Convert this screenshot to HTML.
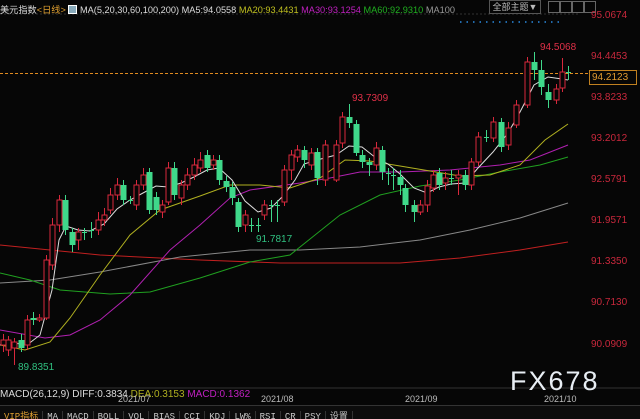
<!DOCTYPE html>
<html><head><meta charset="utf-8"><style>
html,body{margin:0;padding:0;background:#060606;overflow:hidden}
body{width:640px;height:419px;position:relative;font-family:"Liberation Sans","Noto Sans CJK SC",sans-serif}
.t{position:absolute;white-space:nowrap;font-size:10px}
.ax{position:absolute;left:591px;font-size:10px;color:#c8283c}
.bar{position:absolute;left:0;top:405px;width:640px;height:14px;background:#0c0c0c;border-top:1px solid #333}
.bar span{display:inline-block;font-size:9px;color:#c8c8c8;padding:0 4px;height:13px;line-height:13px;border-right:1px solid #333;font-family:"Liberation Mono","Noto Sans CJK SC",monospace}
</style></head><body>
<svg id="c" width="640" height="419" style="position:absolute;left:0;top:0"></svg>
<div class="t" style="left:0;top:2px;color:#ddd;font-size:9.2px">美元指数<span style="color:#e0a030">&lt;日线&gt;</span> <span style="display:inline-block;width:9px;height:9px;background:#8ab;vertical-align:-1px;border:1px solid #fff;box-sizing:border-box"></span> MA(5,20,30,60,100,200) MA5:94.0558 <span style="color:#c0c020">MA20:93.4431</span> <span style="color:#c020c0">MA30:93.1254</span> <span style="color:#20b020">MA60:92.9310</span> <span style="color:#999">MA100</span></div>
<div class="t" style="left:489px;top:0px;width:50px;height:12px;border:1px solid #555;color:#bbb;font-size:9px;text-align:center;line-height:12px">全部主题▼</div>
<div class="t" style="left:548px;top:1px;width:10px;height:10px;border:1px solid #666"></div>
<div class="t" style="left:560px;top:1px;width:10px;height:10px;border:1px solid #666"></div>
<div class="t" style="left:572px;top:1px;width:10px;height:10px;border:1px solid #666"></div>
<div class="t" style="left:584px;top:1px;width:10px;height:10px;border:1px solid #666"></div>
<div class="ax" style="top:10px">95.0674</div>
<div class="ax" style="top:51px">94.4453</div>
<div class="t" style="left:589px;top:70px;width:44px;height:13px;border:1px solid #c08020;color:#e09a30;font-size:10px;line-height:13px;padding-left:2px">94.2123</div>
<div class="ax" style="top:92px">93.8233</div>
<div class="ax" style="top:133px">93.2012</div>
<div class="ax" style="top:174px">92.5791</div>
<div class="ax" style="top:215px">91.9571</div>
<div class="ax" style="top:256px">91.3350</div>
<div class="ax" style="top:297px">90.7130</div>
<div class="ax" style="top:339px">90.0909</div>
<div class="t" style="left:540px;top:42px;color:#e03048">94.5068</div>
<div class="t" style="left:352px;top:93px;color:#e03048">93.7309</div>
<div class="t" style="left:256px;top:234px;color:#30c080">91.7817</div>
<div class="t" style="left:18px;top:362px;color:#30c080">89.8351</div>
<div class="t" style="left:510px;top:366px;color:#e8eef4;font-size:27px;letter-spacing:2px">FX678</div>
<div class="t" style="left:0;top:389px;color:#ddd">MACD(26,12,9) DIFF:0.3834 <span style="color:#b0b020">DEA:0.3153</span> <span style="color:#c020c0">MACD:0.1362</span></div>
<div class="t" style="left:118px;top:394px;color:#bbb;font-size:9px">2021/07</div>
<div class="t" style="left:261px;top:394px;color:#bbb;font-size:9px">2021/08</div>
<div class="t" style="left:405px;top:394px;color:#bbb;font-size:9px">2021/09</div>
<div class="t" style="left:544px;top:394px;color:#bbb;font-size:9px">2021/10</div>
<div class="bar"><span style="color:#e0a030">VIP指标</span><span>MA</span><span>MACD</span><span>BOLL</span><span>VOL</span><span>BIAS</span><span>CCI</span><span>KDJ</span><span>LW%</span><span>RSI</span><span>CR</span><span>PSY</span><span>设置</span></div>
<script>
var s='';
s+='<line x1="0" y1="14" x2="580" y2="14" stroke="#333" stroke-dasharray="2,2"/>';
s+='<line x1="460" y1="22" x2="560" y2="22" stroke="#2a8ae0" stroke-width="1.5" stroke-dasharray="1.5,5"/>';
s+='<line x1="0" y1="73.5" x2="588" y2="73.5" stroke="#e08a20" stroke-dasharray="3,2"/>';
s+='<line x1="0" y1="388" x2="640" y2="388" stroke="#333"/>';
function pl(p,c){s+='<polyline fill="none" stroke="'+c+'" stroke-width="1" points="'+p+'"/>';}
pl("0,245 100,255 200,260 280,263 400,263 460,258 520,250 568,242","#c02020");
pl("0,283 50,280 100,272 180,257 250,250 300,250 360,247 420,240 470,230 520,218 568,203","#888");
pl("0,273 30,280 60,290 110,294 150,292 200,278 250,262 290,255 340,215 380,195 420,186 460,180 500,172 540,165 568,157","#20a020");
pl("0,330 45,338 70,335 100,320 130,295 170,250 200,225 230,198 250,190 300,183 330,178 360,172 400,172 450,170 500,165 530,160 568,145","#b020b0");
pl("0,345 25,350 50,342 70,318 100,275 130,235 160,210 200,196 230,185 260,185 290,188 320,178 345,160 370,161 400,166 430,171 460,176 490,175 520,165 545,140 568,124","#b0b020");
pl("0,345 14,343 27,345 40,335 52,290 59,240 66,226 78,230 90,231 104,224 117,209 130,200 143,193 156,186 168,187 181,183 194,177 207,170 219,168 232,180 245,201 258,212 271,208 283,196 295,180 304,164 317,160 336,155 349,146 362,147 376,158 388,164 400,174 414,188 427,193 439,187 451,184 465,183 478,168 493,152 508,133 520,112 534,85 548,77 562,79 568,80","#ddd");
var d=[[3,345,340,334,352],[8,350,340,336,356],[14,348,342,338,365],[21,340,348,334,352],[27,345,320,315,350],[33,318,320,312,325],[39,320,318,314,322],[46,318,260,255,320],[52,265,225,218,270],[59,225,200,195,232],[65,200,230,195,235],[72,232,245,228,252],[78,240,232,228,250],[84,232,232,228,240],[91,230,230,222,238],[98,230,220,212,235],[104,220,215,208,226],[110,210,195,188,214],[117,195,185,178,200],[123,185,200,180,205],[130,200,200,196,204],[136,205,185,180,210],[143,185,175,168,190],[149,172,210,168,214],[156,197,210,192,215],[162,212,205,200,218],[168,202,168,162,205],[174,168,195,162,200],[181,198,185,180,205],[187,185,175,168,190],[194,175,165,158,180],[200,168,160,152,172],[207,155,168,150,172],[213,165,160,155,170],[219,160,180,155,185],[226,181,187,176,192],[232,187,198,182,205],[238,202,227,198,232],[245,225,215,210,232],[251,225,225,218,232],[258,225,225,218,232],[264,215,205,200,220],[271,205,205,200,222],[277,205,205,200,222],[284,202,170,165,206],[291,170,155,150,180],[297,157,150,145,162],[304,150,160,146,168],[311,165,153,148,170],[317,152,178,148,185],[325,180,145,140,186],[336,180,145,140,182],[342,143,117,112,148],[349,117,123,104,128],[356,124,153,120,156],[362,155,162,150,168],[369,162,165,158,176],[376,165,148,142,170],[382,150,172,146,180],[388,173,173,168,185],[393,175,175,168,190],[400,177,185,170,195],[405,188,205,184,212],[414,205,212,200,222],[420,212,205,200,215],[427,205,186,180,212],[433,188,175,170,192],[439,173,185,168,190],[445,183,178,172,190],[451,178,178,170,185],[458,178,175,170,195],[465,175,185,170,190],[471,185,162,158,190],[478,162,137,132,166],[486,137,137,130,142],[493,138,122,117,142],[501,122,147,118,152],[508,145,128,122,150],[516,125,105,100,128],[527,105,62,57,108],[534,62,70,52,80],[541,70,87,60,95],[548,92,100,84,108],[556,100,89,84,104],[562,88,72,58,92],[568,72,72,66,80]];
d.forEach(function(c){var x=c[0],o=c[1],cl=c[2],h=c[3],l=c[4];
 if(Math.abs(o-cl)<1){s+='<line x1="'+(x+.5)+'" y1="'+h+'" x2="'+(x+.5)+'" y2="'+l+'" stroke="#3fd88a"/><line x1="'+(x-2)+'" y1="'+(o+.5)+'" x2="'+(x+3)+'" y2="'+(o+.5)+'" stroke="#3fd88a"/>';return;}
 if(cl<o){s+='<line x1="'+(x+.5)+'" y1="'+h+'" x2="'+(x+.5)+'" y2="'+l+'" stroke="#d8283c"/><rect x="'+(x-2)+'" y="'+cl+'" width="5" height="'+(o-cl)+'" fill="#060606" stroke="#d8283c"/>';}
 else{s+='<line x1="'+(x+.5)+'" y1="'+h+'" x2="'+(x+.5)+'" y2="'+l+'" stroke="#3fd88a"/><rect x="'+(x-2.5)+'" y="'+o+'" width="6" height="'+(cl-o)+'" fill="#3fd88a"/>';}
});
document.getElementById('c').innerHTML=s;
</script>
</body></html>
